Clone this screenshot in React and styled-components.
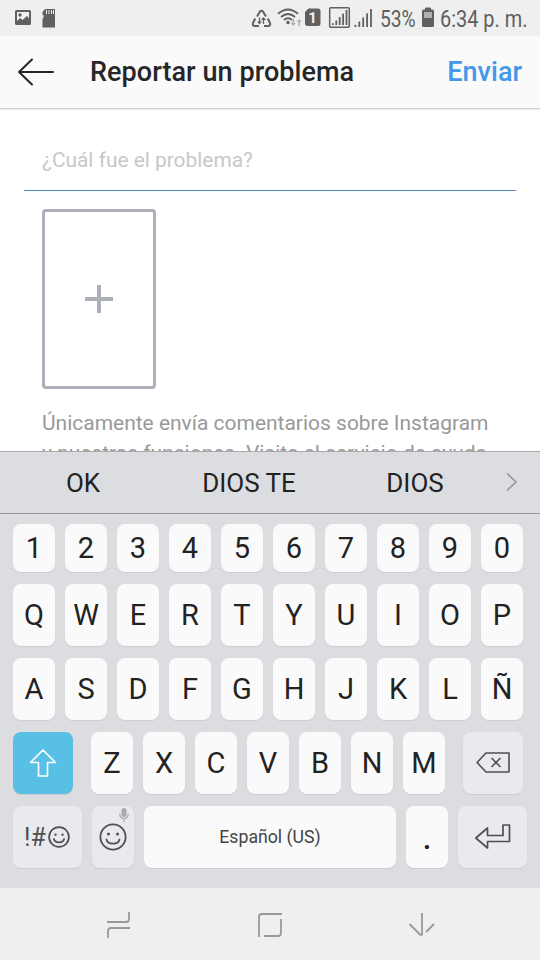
import React from 'react';
import styled, { createGlobalStyle } from 'styled-components';

const GlobalStyle = createGlobalStyle`
    * {
        box-sizing: border-box;
    }

    body {
        margin: 0;
        background: #fff;
        font-family: Roboto, 'Liberation Sans', sans-serif;
    }

    svg {
        display: block;
        flex-shrink: 0;
    }
`;

const Screen = styled.div`
    display: flex;
    flex-direction: column;
    width: 540px;
    height: 960px;
    overflow: hidden;
    background: #fff;
`;

const StatusBar = styled.div`
    display: flex;
    height: 36px;
    flex-shrink: 0;
    justify-content: space-between;
    padding: 0 12px 0 14px;
    background: #efefef;
    color: #606060;
`;

const StatusGroup = styled.div`
    display: flex;
    align-items: center;
`;

const Condensed = styled.span`
    width: ${({ $width }) => $width}px;
    font-size: 24px;
    line-height: 36px;
    white-space: nowrap;
    padding-top: 2px;
    transform: scaleX(${({ $scale }) => $scale});
    transform-origin: left;
`;

const Header = styled.header`
    display: flex;
    align-items: center;
    height: 73px;
    flex-shrink: 0;
    padding: 0 18px 0 17px;
    background: #fafafa;
    border-bottom: 1px solid #d2d2d2;
    box-shadow: 0 1px 1px #ececec;
`;

const Title = styled.h1`
    flex: 1;
    margin: 0 0 0 35px;
    color: #262626;
    font-size: 27px;
    font-weight: 500;
    letter-spacing: 0.060px;
`;

const SendButton = styled.button`
    padding: 0;
    border: 0;
    background: none;
    color: #4497e9;
    font: 500 27px Roboto, 'Liberation Sans', sans-serif;
`;

const Form = styled.main`
    flex: 1;
    min-height: 0;
    overflow: hidden;
    padding: 26px 24px 0;
`;

const Field = styled.div`
    height: 56px;
    padding: 0 18px;
    border-bottom: 1px solid #5286b0;
    color: #c8c8c8;
    font-size: 20.9px;
    line-height: 50px;
`;

const AddPhoto = styled.div`
    display: flex;
    align-items: center;
    justify-content: center;
    width: 114px;
    height: 180px;
    margin: 18px 0 0 18px;
    border: 3px solid #adb0b8;
    border-radius: 4px;
`;

const Note = styled.p`
    margin: 19px 0 0 18px;
    color: #999;
    font-size: 20.980px;
    line-height: 30px;
    white-space: nowrap;
`;

const Keyboard = styled.section`
    height: 437px;
    flex-shrink: 0;
    border-top: 1px solid #a9aaad;
    background: #dcdde1;
    color: #222;
`;

const Suggestions = styled.div`
    display: flex;
    align-items: center;
    height: 62px;
    border-bottom: 1px solid #96979b;
`;

const Suggestion = styled.div`
    width: 166px;
    text-align: center;
    font-size: 26px;
`;

const Keys = styled.div`
    display: flex;
    flex-direction: column;
    gap: 12px;
    padding: 10px 13px 0;
`;

const Row = styled.div`
    display: flex;
    gap: 10px;
`;

const Letters = styled(Row)`
    margin: 0 8px;
`;

const backgrounds = {
    plain: '#fafafa',
    muted: '#e9eaee',
    active: '#57c0e4',
};

const Key = styled.div`
    position: relative;
    display: flex;
    align-items: center;
    justify-content: center;
    flex-shrink: 0;
    width: ${({ $width }) => $width || 42}px;
    height: ${({ $short }) => ($short ? 48 : 62)}px;
    border-radius: 8px;
    background: ${({ $kind }) => backgrounds[$kind || 'plain']};
    box-shadow: 0 1px 1px #cbccd0;
    font-size: 29px;
`;

const SpaceLabel = styled.span`
    padding-bottom: 1px;
    color: #444;
    font-size: 17.700px;
`;

const Period = styled.span`
    padding-top: 2px;
    font-size: 31px;
    font-weight: 500;
`;

const Symbols = styled.span`
    margin: 0 2px 0 -1px;
    color: #505050;
    font-size: 25px;
`;

const Mic = styled.svg`
    position: absolute;
    top: 2px;
    right: 5px;
`;

const NavBar = styled.nav`
    display: flex;
    align-items: center;
    justify-content: space-between;
    height: 72px;
    flex-shrink: 0;
    padding: 0 104px;
    background: #efefef;
`;

// Status icons share the bar's coordinates, so each one is a slice of it
const StatusIcon = ({ x, width, children }) => (
    <svg width={width} height="36" viewBox={`${x} 0 ${width} 36`} fill="#606060">
        {children}
    </svg>
);

const Bars = ({ x, y, step, height }) => (
    <g>
        {[0.12, 0.3, 0.53, 0.76, 1].map((size, i) => (
            <rect key={size} x={x + i * step} y={y - size * height} width="1.8" height={size * height} />
        ))}
    </g>
);

const Smiley = ({ size }) => (
    <svg width={size} height={size} viewBox="0 0 28 28" fill="none" stroke="#505050" strokeWidth={size < 28 ? 2.2 : 1.8}>
        <circle cx="14" cy="14" r="12.6" />
        <path d="M7.5 16.5c1.4 5.6 11.600 5.6 13 0" strokeLinecap="round" />
        <circle cx="9.500" cy="11" r="1.500" fill="#505050" stroke="none" />
        <circle cx="18.500" cy="11" r="1.500" fill="#505050" stroke="none" />
    </svg>
);

const Status = () => (
    <StatusBar>
        <StatusGroup>
            <StatusIcon x={14} width={42}>
                <path
                    fillRule="evenodd"
                    d="M16.500 10h13q1.500 0 1.500 1.500v12q0 1.500-1.500 1.500h-13q-1.500 0-1.500-1.500v-12q0-1.500 1.500-1.500zM17 12v9l3-3 2.500 2 4.500-4 2 2.500v-6.500z"
                />
                <circle cx="20" cy="15" r="1.700" />
                <path
                    fillRule="evenodd"
                    d="M45 9h10v18.500H42.500v-8.500l1-1.500v-2.500h-1v-3zM46 10v4h1v-4zM48.500 10v4h1v-4zM51 10v4h1v-4zM53 10v4h1v-4z"
                />
            </StatusIcon>
        </StatusGroup>
        <StatusGroup>
            <StatusIcon x={250} width={25}>
                <g fill="none" stroke="#606060" strokeWidth="2">
                    <path d="M257 16.500l3-5q1.500-1.500 3 0l3 5M255.200 18.500l-2.200 4.500q-.8 2.500 1.500 3h4.500M267.800 18.500l2.200 4.500q.8 2.500-1.500 3h-4.500" />
                    <path d="M259.500 17.500v5.500M263.500 24v-5.500" strokeWidth="1.300" />
                </g>
                <path d="M257 21.500h5l-2.500 3zM261 20h5l-2.500-3z" />
            </StatusIcon>
            <StatusIcon x={275} width={28}>
                <g fill="none" stroke="#606060" strokeWidth="1.900">
                    <path d="M278 13.800q10-8.800 20 0M281 17q7-6 14 0M284 20q4-3.500 8 0" />
                </g>
                <circle cx="288" cy="22.500" r="1.700" />
                <path d="M292.500 19h1.500v4h2l-2.800 3-2.700-3h2zM298.500 26h1.500v-4h1.800l-2.500-3-2.700 3h1.900z" fill="#b0b0b0" />
            </StatusIcon>
            <StatusIcon x={303} width={24}>
                <path d="M308.500 8.500H318q2.500 0 2.500 2.500v13q0 2-2.500 2h-10.500q-2.500 0-2.500-2V12z" />
                <text x="312.500" y="22.800" fontSize="15" fontWeight="700" textAnchor="middle" fill="#efefef">
                    1
                </text>
            </StatusIcon>
            <StatusIcon x={327} width={25}>
                <rect x="329.700" y="7.700" width="19.600" height="19.600" rx="1" fill="none" stroke="#606060" strokeWidth="1.500" />
                <Bars x={332} y={25} step={3.4} height={15} />
            </StatusIcon>
            <StatusIcon x={352} width={28}>
                <Bars x={354.5} y={27} step={3.9} height={18} />
            </StatusIcon>
            <Condensed $width={42} $scale={0.8}>53%</Condensed>
            <StatusIcon x={422} width={18}>
                <path d="M425 8.500q0-1 1-1h4q1 0 1 1v1h1.500q1.500 0 1.500 1.500v14.500q0 1.500-1.500 1.500h-9q-1.500 0-1.500-1.500V11q0-1.500 1.500-1.500h1.500z" />
                <rect x="424" y="12" width="8" height="6" fill="#b0b0b0" />
            </StatusIcon>
            <Condensed $width={88} $scale={0.83}>6:34 p. m.</Condensed>
        </StatusGroup>
    </StatusBar>
);

const App = () => (
    <>
        <GlobalStyle />
        <Screen>
            <Status />
            <Header>
                <svg width="38" height="28" viewBox="0 0 38 28" fill="none" stroke="#262626" strokeWidth="2" strokeLinecap="round" strokeLinejoin="round">
                    <path d="M36 14H2M15 1.500L2 14l13 12.500" />
                </svg>
                <Title>Reportar un problema</Title>
                <SendButton>Enviar</SendButton>
            </Header>
            <Form>
                <Field>¿Cuál fue el problema?</Field>
                <AddPhoto>
                    <svg width="28" height="28" stroke="#adb0b8" strokeWidth="4">
                        <path d="M0 14h28M14 0v28" />
                    </svg>
                </AddPhoto>
                <Note>
                    Únicamente envía comentarios sobre Instagram
                    <br />y nuestras funciones. Visita el servicio de ayuda
                </Note>
            </Form>
            <Keyboard>
                <Suggestions>
                    {['OK', 'DIOS TE', 'DIOS'].map((word) => (
                        <Suggestion key={word}>{word}</Suggestion>
                    ))}
                    <svg width="26" height="20" viewBox="0 0 26 20" fill="none" stroke="#999" strokeWidth="1.700">
                        <path d="M9 .5l9 8.500-9 8.500" />
                    </svg>
                </Suggestions>
                <Keys>
                    {['1234567890', 'QWERTYUIOP', 'ASDFGHJKLÑ'].map((row, i) => (
                        <Row key={row}>
                            {row.split('').map((letter) => (
                                <Key key={letter} $short={i === 0}>{letter}</Key>
                            ))}
                        </Row>
                    ))}
                    <Row>
                        <Key $width={60} $kind="active">
                            <svg width="28" height="28" viewBox="0 0 28 28" fill="none" stroke="#fff" strokeWidth="1.600" strokeLinejoin="round">
                                <path d="M14 1L1.500 13.500H9.500V27h9V13.500h8z" />
                            </svg>
                        </Key>
                        <Letters as="div">
                            {'ZXCVBNM'.split('').map((letter) => (
                                <Key key={letter}>{letter}</Key>
                            ))}
                        </Letters>
                        <Key $width={60} $kind="muted">
                            <svg width="34" height="22" viewBox="0 0 34 22" fill="none" stroke="#505050" strokeWidth="1.600" strokeLinejoin="round">
                                <path d="M10 1h23v19H10L1 10.500zM15.500 6l9 9M24.500 6l-9 9" />
                            </svg>
                        </Key>
                    </Row>
                    <Row>
                        <Key $width={69} $kind="muted">
                            <Symbols>!#</Symbols>
                            <Smiley size={22} />
                        </Key>
                        <Key $kind="muted">
                            <Smiley size={28} />
                            <Mic width="10" height="14" viewBox="0 0 10 14" fill="none" stroke="#aaa" strokeWidth="1.200">
                                <rect x="2.500" y="0" width="5" height="9" rx="2.500" fill="#aaa" stroke="none" />
                                <path d="M.8 5.500q0 5 4.200 5t4.200-5M5 10.500V14" />
                            </Mic>
                        </Key>
                        <Key $width={252}>
                            <SpaceLabel>Español (US)</SpaceLabel>
                        </Key>
                        <Key>
                            <Period>.</Period>
                        </Key>
                        <Key $width={69} $kind="muted">
                            <svg width="36" height="26" viewBox="0 0 36 26" fill="none" stroke="#505050" strokeWidth="1.700" strokeLinejoin="round">
                                <path d="M.8 14L12.500 4v7.500H28V1h6.500v16.500H12.500V24z" />
                            </svg>
                        </Key>
                    </Row>
                </Keys>
            </Keyboard>
            <NavBar>
                <svg width="28" height="28" viewBox="0 0 28 28" fill="none" stroke="#999" strokeWidth="1.800">
                    <path d="M3 12h19q3 0 3-3V2M26 18H7q-3 0-3 3v7" />
                </svg>
                <svg width="28" height="28" viewBox="0 0 28 28" fill="none" stroke="#999" strokeWidth="1.800">
                    <path d="M3 27V7q0-3 3-3h20M25 9v14q0 3-3 3H8" />
                </svg>
                <svg width="28" height="28" viewBox="0 0 28 28" fill="none" stroke="#999" strokeWidth="1.800">
                    <path d="M14 3v21.500q-1 1-2 0L1.500 14M26 14l-8 8" />
                </svg>
            </NavBar>
        </Screen>
    </>
);

export default App;
